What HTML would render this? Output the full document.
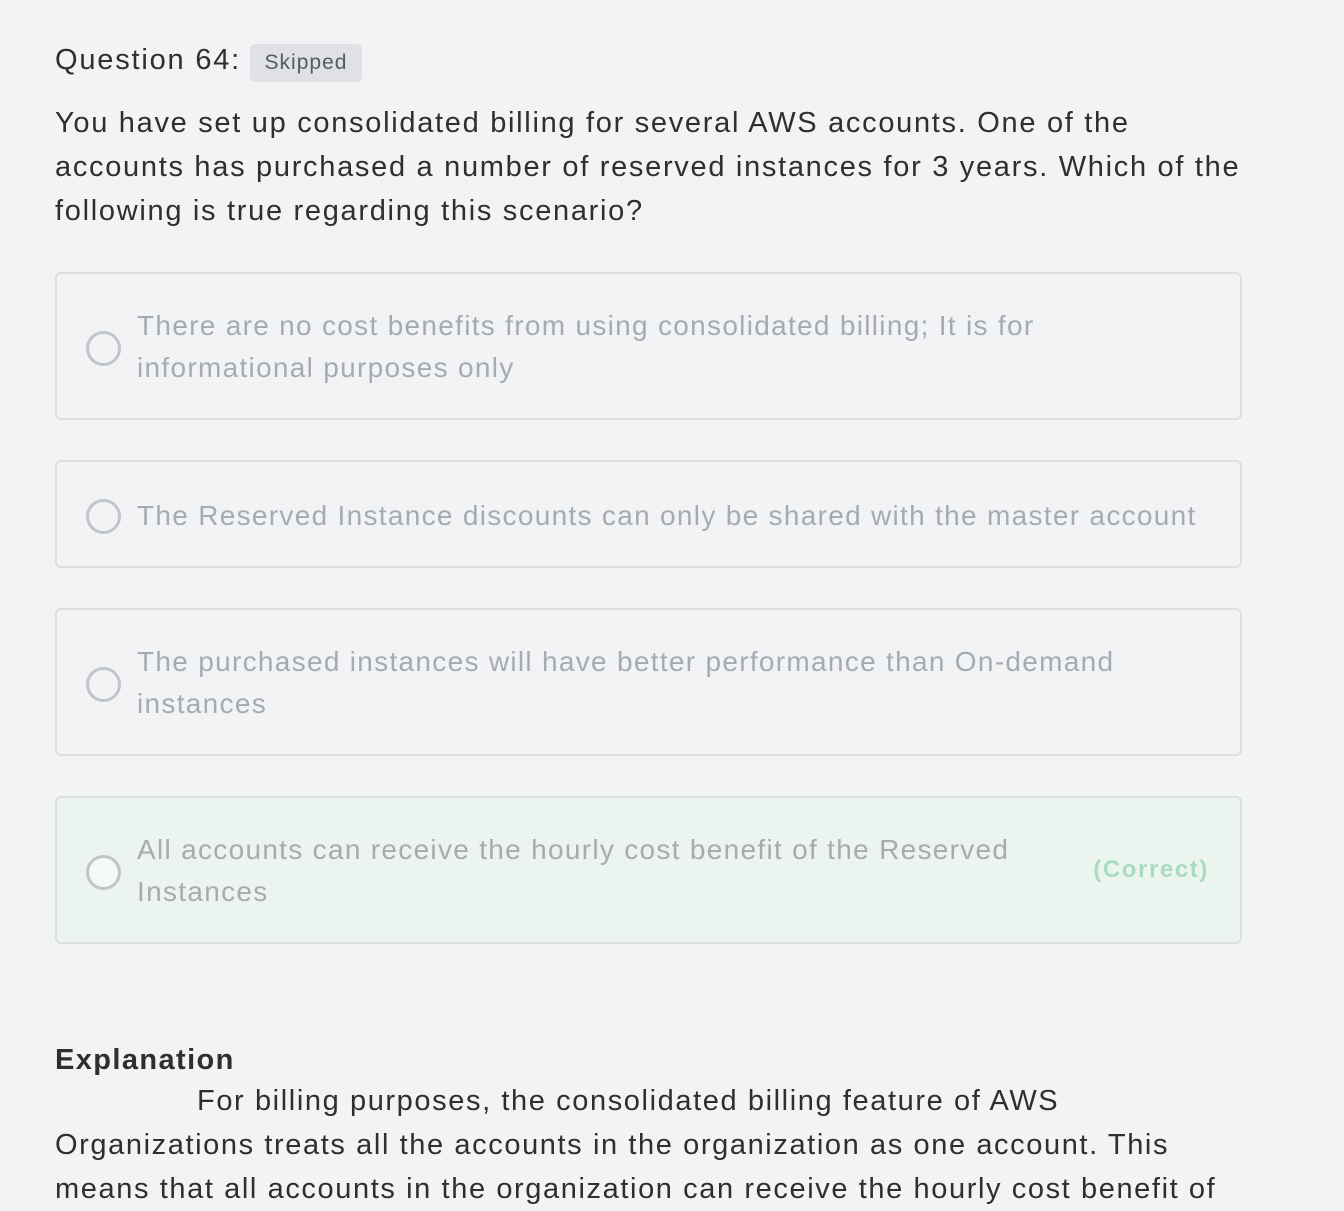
<!DOCTYPE html>
<html><head><meta charset="utf-8"><style>
body{margin:0;width:1344px;height:1210px;background:#f2f3f5;font-family:"Liberation Sans",sans-serif;color:#2d2f31;overflow:hidden;position:relative}
.a{position:absolute;white-space:nowrap}
.box{position:absolute;left:55px;width:1187px;border:2px solid #dcdee1;border-radius:6px;box-sizing:border-box;background:#f2f3f5}
.r{position:absolute;left:29px;width:35px;height:35px;border:3.5px solid #c1c5cb;border-radius:50%;box-sizing:border-box}
.t{position:absolute;left:80px;font-size:28px;line-height:42px;color:#a6abb1;letter-spacing:1.3px;white-space:nowrap}
.q{letter-spacing:1.6px}
</style></head><body>
<div class="a q" style="left:55px;top:40px;font-size:29px;line-height:40px;letter-spacing:1.8px">Question 64:</div>
<div class="a" style="left:250px;top:44px;width:112px;height:38px;background:#dfe1e4;border-radius:5px;font-size:21px;line-height:38px;text-align:center;color:#555b63;letter-spacing:1px">Skipped</div>
<div class="a q" style="left:55px;top:101px;font-size:29px;line-height:44px;letter-spacing:1.7px">You have set up consolidated billing for several AWS accounts. One of the<br>accounts has purchased a number of reserved instances for 3 years. Which of the<br>following is true regarding this scenario?</div>

<div class="box" style="top:272px;height:148px"><div class="r" style="top:57px"></div><div class="t" style="top:31px">There are no cost benefits from using consolidated billing; It is for<br>informational purposes only</div></div>
<div class="box" style="top:460px;height:108px"><div class="r" style="top:37px"></div><div class="t" style="top:33px">The Reserved Instance discounts can only be shared with the master account</div></div>
<div class="box" style="top:608px;height:148px"><div class="r" style="top:57px"></div><div class="t" style="top:31px">The purchased instances will have better performance than On-demand<br>instances</div></div>
<div class="box" style="top:796px;height:148px;background:#ecf4ef"><div class="r" style="top:57px;background:#f4f8f6"></div><div class="t" style="top:31px">All accounts can receive the hourly cost benefit of the Reserved<br>Instances</div><div class="a" style="right:31px;top:58px;font-size:24px;font-weight:bold;color:#a9dcbf;letter-spacing:1.6px">(Correct)</div></div>

<div class="a" style="left:55px;top:1040px;font-size:29px;font-weight:bold;line-height:40px;letter-spacing:1.4px">Explanation</div>
<div class="a q" style="left:55px;top:1079px;font-size:29px;line-height:44px"><span style="padding-left:142px"></span>For billing purposes, the consolidated billing feature of AWS<br>Organizations treats all the accounts in the organization as one account. This<br>means that all accounts in the organization can receive the hourly cost benefit of</div>
</body></html>
